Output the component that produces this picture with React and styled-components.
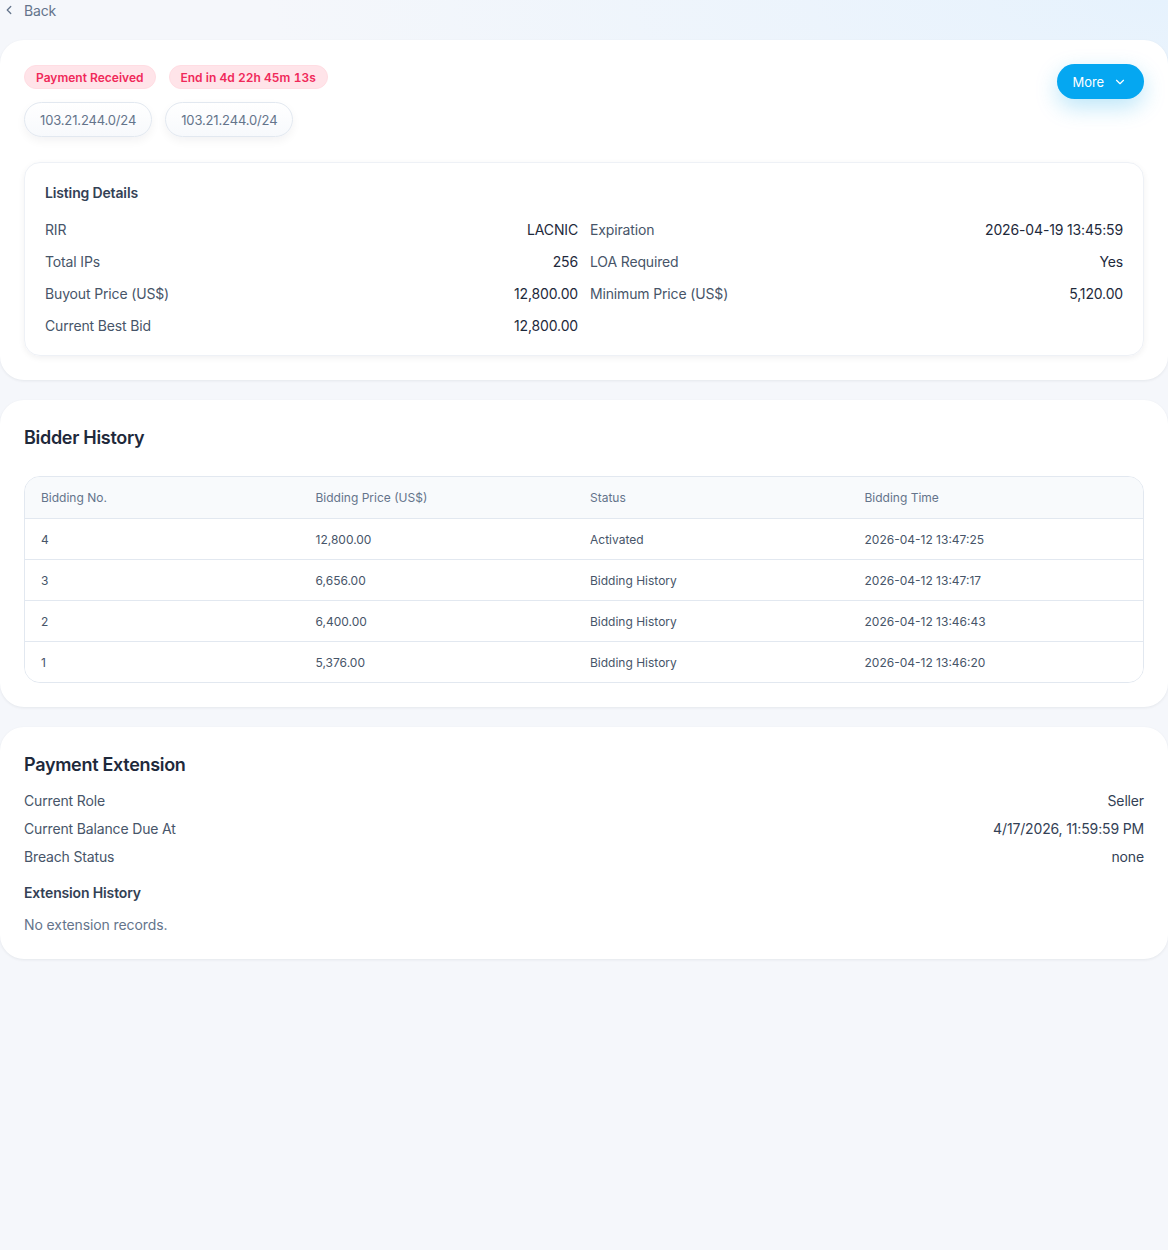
import styled, { createGlobalStyle } from 'styled-components';

const GlobalStyle = createGlobalStyle`
     html, body {
          margin: 0;
          padding: 0;
     }
     body {
          font-family: Inter, "Noto Sans", "Liberation Sans", sans-serif;
          background:
               radial-gradient(ellipse 900px 260px at 100% 0%, #e6f2fd 0%, rgba(230,242,253,0) 100%),
               #f5f7fb;
          min-height: 1250px;
          color: #1e293b;
     }
     * {
          box-sizing: border-box;
     }
`;

const Page = styled.div`
     display: flex;
     flex-direction: column;
     gap: 20px;
     padding-bottom: 40px;
`;

const BackLink = styled.a`
     display: flex;
     align-items: center;
     gap: 8px;
     height: 20px;
     padding-left: 2px;
     font-size: 14px;
     letter-spacing: -0.15px;
     color: #64748b;
     cursor: pointer;
`;

const Card = styled.section`
     background: #fff;
     border-radius: 24px;
     padding: 24px;
     box-shadow: 0 1px 3px rgba(15, 23, 42, 0.07);
`;

const TopRow = styled.div`
     display: flex;
     justify-content: space-between;
     align-items: flex-start;
`;

const TagStack = styled.div`
     display: flex;
     flex-direction: column;
     gap: 13px;
     padding-top: 1px;
`;

const TagRow = styled.div`
     display: flex;
     gap: 13px;
`;

const Badge = styled.span`
     display: inline-flex;
     align-items: center;
     height: 24px;
     padding: 0 11px;
     border-radius: 999px;
     background: #ffe4e9;
     border: 1px solid #ffdde3;
     color: #f0295a;
     font-size: 12px;
     font-weight: 600;
     font-variant-numeric: tabular-nums;
`;

const IpChip = styled.span`
     display: inline-flex;
     align-items: center;
     height: 35px;
     padding: 0 15px;
     border-radius: 999px;
     border: 1px solid #e2e8f0;
     background: linear-gradient(#ffffff, #f7f9fc);
     box-shadow: 0 4px 10px rgba(15, 23, 42, 0.05);
     color: #64748b;
     font-size: 13px;
     letter-spacing: -0.15px;
`;

const MoreButton = styled.button`
     display: inline-flex;
     align-items: center;
     gap: 9px;
     height: 35px;
     padding: 0 17px 0 16px;
     border: none;
     border-radius: 999px;
     background: #05a7f1;
     color: #fff;
     font-family: inherit;
     font-size: 13px;
     letter-spacing: -0.1px;
     box-shadow: 0 8px 22px rgba(14, 165, 233, 0.28);
     cursor: pointer;
`;

const DetailBox = styled.div`
     margin-top: 25px;
     border: 1px solid #eef1f6;
     border-radius: 16px;
     padding: 20px 20px 19px;
     box-shadow: 0 2px 6px rgba(15, 23, 42, 0.06);
`;

const BoxTitle = styled.h3`
     margin: 0;
     font-size: 14px;
     line-height: 20px;
     font-weight: 600;
     letter-spacing: -0.15px;
     color: #334155;
`;

const DetailGrid = styled.div`
     display: grid;
     grid-template-columns: 1fr 1fr;
     column-gap: 12px;
     row-gap: 12px;
     margin-top: 17px;
`;

const Field = styled.div`
     display: flex;
     justify-content: space-between;
     font-size: 14px;
     line-height: 20px;
     letter-spacing: -0.15px;
`;

const FieldLabel = styled.span`
     color: #475569;
`;

const FieldValue = styled.span`
     color: #1e293b;
`;

const SectionTitle = styled.h2`
     margin: 0;
     font-size: 18px;
     line-height: 28px;
     font-weight: 600;
     letter-spacing: -0.3px;
     color: #1e293b;
`;

const Table = styled.div`
     margin-top: 24px;
     border: 1px solid #e2e8f0;
     border-radius: 16px;
     overflow: hidden;
`;

const TableRow = styled.div`
     display: grid;
     grid-template-columns: repeat(4, 1fr);
     align-items: center;
     height: 41px;
     padding: 0 4px 0 16px;
     font-size: 12px;
     background: ${props => (props.$head ? '#f8fafc' : '#fff')};
     color: ${props => (props.$head ? '#64748b' : '#475569')};
     border-top: ${props => (props.$head ? 'none' : '1px solid #e2e8f0')};
`;

const InfoList = styled.div`
     display: flex;
     flex-direction: column;
     gap: 8px;
     margin-top: 12px;
`;

const InfoRow = styled.div`
     display: flex;
     justify-content: space-between;
     font-size: 14px;
     line-height: 20px;
     letter-spacing: -0.15px;
     color: #475569;
`;

const InfoValue = styled.span`
     color: #334155;
`;

const SubTitle = styled.h4`
     margin: 16px 0 0;
     font-size: 14px;
     line-height: 20px;
     font-weight: 600;
     letter-spacing: -0.15px;
     color: #334155;
`;

const EmptyText = styled.p`
     margin: 12px 0 0;
     font-size: 14px;
     line-height: 20px;
     letter-spacing: -0.1px;
     color: #64748b;
`;

const ChevronLeft = () => (
     <svg width="14" height="14" viewBox="0 0 24 24" fill="none" stroke="#64748b" strokeWidth="2.2" strokeLinecap="round" strokeLinejoin="round">
          <path d="M15 18l-6-6 6-6" />
     </svg>
);

const ChevronDown = () => (
     <svg width="14" height="14" viewBox="0 0 24 24" fill="none" stroke="#fff" strokeWidth="2" strokeLinecap="round" strokeLinejoin="round">
          <path d="M6 9l6 6 6-6" />
     </svg>
);

const details = [
     ['RIR', 'LACNIC'],
     ['Expiration', '2026-04-19 13:45:59'],
     ['Total IPs', '256'],
     ['LOA Required', 'Yes'],
     ['Buyout Price (US$)', '12,800.00'],
     ['Minimum Price (US$)', '5,120.00'],
     ['Current Best Bid', '12,800.00'],
];

const bids = [
     { no: 4, price: '12,800.00', status: 'Activated', time: '2026-04-12 13:47:25' },
     { no: 3, price: '6,656.00', status: 'Bidding History', time: '2026-04-12 13:47:17' },
     { no: 2, price: '6,400.00', status: 'Bidding History', time: '2026-04-12 13:46:43' },
     { no: 1, price: '5,376.00', status: 'Bidding History', time: '2026-04-12 13:46:20' },
];

const extension = [
     ['Current Role', 'Seller'],
     ['Current Balance Due At', '4/17/2026, 11:59:59 PM'],
     ['Breach Status', 'none'],
];

const App = () => {
     return (
          <>
               <GlobalStyle />
               <Page>
                    <BackLink>
                         <ChevronLeft />
                         Back
                    </BackLink>

                    <Card>
                         <TopRow>
                              <TagStack>
                                   <TagRow>
                                        <Badge>Payment Received</Badge>
                                        <Badge>End in 4d 22h 45m 13s</Badge>
                                   </TagRow>
                                   <TagRow>
                                        <IpChip>103.21.244.0/24</IpChip>
                                        <IpChip>103.21.244.0/24</IpChip>
                                   </TagRow>
                              </TagStack>
                              <MoreButton>
                                   More
                                   <ChevronDown />
                              </MoreButton>
                         </TopRow>
                         <DetailBox>
                              <BoxTitle>Listing Details</BoxTitle>
                              <DetailGrid>
                                   {details.map(([label, value]) => (
                                        <Field key={label}>
                                             <FieldLabel>{label}</FieldLabel>
                                             <FieldValue>{value}</FieldValue>
                                        </Field>
                                   ))}
                              </DetailGrid>
                         </DetailBox>
                    </Card>

                    <Card>
                         <SectionTitle>Bidder History</SectionTitle>
                         <Table>
                              <TableRow $head>
                                   <span>Bidding No.</span>
                                   <span>Bidding Price (US$)</span>
                                   <span>Status</span>
                                   <span>Bidding Time</span>
                              </TableRow>
                              {bids.map(bid => (
                                   <TableRow key={bid.no}>
                                        <span>{bid.no}</span>
                                        <span>{bid.price}</span>
                                        <span>{bid.status}</span>
                                        <span>{bid.time}</span>
                                   </TableRow>
                              ))}
                         </Table>
                    </Card>

                    <Card>
                         <SectionTitle>Payment Extension</SectionTitle>
                         <InfoList>
                              {extension.map(([label, value]) => (
                                   <InfoRow key={label}>
                                        <span>{label}</span>
                                        <InfoValue>{value}</InfoValue>
                                   </InfoRow>
                              ))}
                         </InfoList>
                         <SubTitle>Extension History</SubTitle>
                         <EmptyText>No extension records.</EmptyText>
                    </Card>
               </Page>
          </>
     );
};

export default App;
